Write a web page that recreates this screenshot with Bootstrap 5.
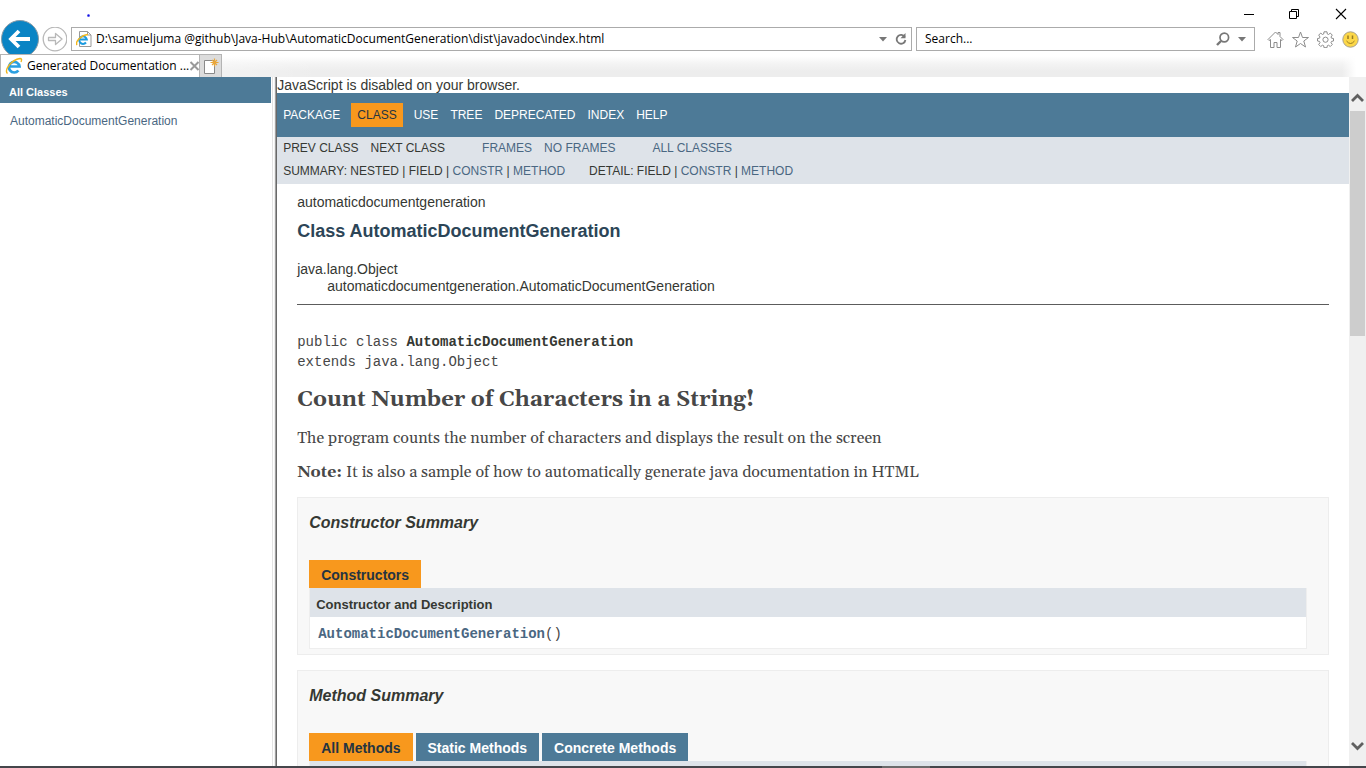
<!DOCTYPE html>
<html lang="en">
<head>
<meta charset="utf-8">
<meta name="viewport" content="width=device-width, initial-scale=1">
<title>Generated Documentation</title>
<link href="https://cdn.jsdelivr.net/npm/bootstrap@5.3.0/dist/css/bootstrap.min.css" rel="stylesheet">
<style>
:root { --blue: #4d7a97; --pale: #dee3e9; --orange: #f8981d; --link: #4a6782; }
body { font: 14px/17px "Liberation Sans", Arial, sans-serif; color: #353833; background: #fff; }
a { color: var(--link); text-decoration: none; }
button { border: 0; background: none; padding: 0; }
svg { display: block; flex: none; }

/* browser window */
.chrome-ui { font: 12px/16px "Open Sans", "Noto Sans", sans-serif; color: #000; }
.caption-row { height: 25px; padding: 7px 17px 0 87px; }
.caption-btns { gap: 30px; }
.ink-dot { width: 3px; height: 3px; margin-top: 7px; background: radial-gradient(#11d, #88f); border-radius: 50%; }
.address-row { height: 29px; padding: 2px 7px 0 0; }
.address-row .back-btn { width: 40px; height: 38px; margin: -8px 0 -8px 0; }
.field { height: 24px; border: 1px solid #ababab; background: #fff; }
.field input { border: 0; outline: 0; padding: 0; min-width: 0; background: transparent; color: #000; font: inherit; }
.search-field { flex: 0 0 339px; }
.tab-row { height: 23px; background: linear-gradient(90deg, #fff 0, #fff0 320px), linear-gradient(270deg, #fff 0, #fff 10px, #fff0 24px), linear-gradient(#fff 10%, #f4f4f4 40%, #ededed 75%); }
.page-tab { width: 199px; border: 1px solid #b4b4b4; border-width: 1px 0 0 1px; background: #fff; position: relative; }
.new-tab { width: 23px; border: 1px solid #b4b4b4; border-bottom: 0; background: #dcdcdc; }

/* left frame */
.class-list { flex: 0 0 calc(20% - 2px); }
.class-bar { height: 26px; padding: 0 9px; background: var(--blue); color: #fff; font-size: 11px; font-weight: 700; line-height: 30px; margin: 0; }
.class-links { padding: 10px; font-size: 12px; }
.splitter { flex: 0 0 6px; background: linear-gradient(90deg, #fff 1px, #e3e3e3 1px 2px, #fff 2px 3px, #f0f0f0 3px 4px, #a0a0a0 4px 5px, #696969 5px); }

/* right frame */
.doc-notice { line-height: 16px; }
.top-nav { height: 44px; background: var(--blue); font-size: 12px; line-height: 14px; padding-top: 10px; }
.top-nav li { padding: 5px 6px; }
.top-nav a { color: #fff; }
.top-nav .current { background: var(--orange); color: #253441; margin: 0 5px; }
.sub-nav { height: 47px; background: var(--pale); font-size: 12px; line-height: 23px; }
.sub-nav ul { margin: 0 25px 0 0; }
.sub-nav .nav-links li { padding: 0 6px; }
.sub-nav .jump { padding-left: 6px; }
.doc-body { padding: 10px 20px 0; }
.doc-body h1 { font-size: 18px; line-height: 22px; font-weight: 700; color: #2c4557; margin: 9px 0 19px; }
.tree-child { padding-left: 30px; }
.rule { border: 0; border-top: 1px solid #5c5c5c; opacity: 1; margin: 9px 0 27px; }
pre { font: 14px/20px "Liberation Mono", "Courier New", monospace; color: #474747; margin: 0; }
pre strong { color: #353833; }
.prose { font-family: Georgia, Gelasio, "Liberation Serif", serif; color: #474747; font-size: 16px; line-height: 18px; }
.prose h2 { font-size: 22px; line-height: 26px; font-weight: 700; margin: 15px 0 16px; }
.prose p { margin: 0 0 16px; }
.summary { background: #f8f8f8; border: 1px solid #ededed; padding: 15px 21px 5px 11px; margin-bottom: 15px; }
.summary h3 { font-size: 16px; line-height: 20px; font-weight: 700; font-style: italic; margin: 0 0 27px; }
.kind-tabs { gap: 3px; }
.kind-tabs button, .kind-tabs span { background: var(--blue); color: #fff; font-weight: 700; font-size: 14px; line-height: 18px; padding: 6px 12px 4px; }
.kind-tabs .on { background: var(--orange); color: #253441; }
.members { width: 100%; background: #fff; border: 1px solid #eee; border-top: 0; }
.members th { background: var(--pale); font-size: 13px; line-height: 17px; padding: 8px 6px 4px; }
.members td { font: 14px/17px "Liberation Mono", "Courier New", monospace; padding: 9px 8px 5px; color: #474747; }

/* scroll bar and screen edge */
.scroll-rail { flex: 0 0 17px; background: #f0f0f0; padding: 15px 1px 14px; }
.scroll-rail .thumb { height: 225px; margin: 8px 0 auto; background: #cdcdcd; }
.screen-edge { flex: 0 0 2px; background: linear-gradient(90deg, #45464b 0 882px, #6b6b6b 882px 930px, #45464b 930px); }
</style>
</head>
<body class="vh-100 overflow-hidden d-flex flex-column">

<header class="chrome-ui flex-shrink-0">
  <div class="caption-row d-flex justify-content-between">
    <span class="ink-dot"></span>
    <div class="caption-btns d-flex align-items-start">
      <button aria-label="Minimize"><svg width="16" height="14"><path d="M3 7.5h10" stroke="#000"/></svg></button>
      <button aria-label="Restore"><svg width="16" height="14"><path d="M2.500 4.500h7v7h-7zM4.500 4.500v-2h7v7h-2" fill="none" stroke="#000"/></svg></button>
      <button aria-label="Close"><svg width="16" height="14"><path d="M3 2l10 10M13 2L3 12" stroke="#000" stroke-width="1.100"/></svg></button>
    </div>
  </div>
  <div class="address-row d-flex align-items-start">
    <button class="back-btn" aria-label="Back"><svg width="40" height="38" viewBox="0 0 40 38"><circle cx="20" cy="20" r="18.500" fill="#0a84c4" stroke="#8a9ba6"/><path d="M30 20H12M19 12l-8 8 8 8" fill="none" stroke="#fff" stroke-width="3.800"/></svg></button>
    <button class="me-1" aria-label="Forward"><svg width="27" height="26" viewBox="0 0 27 26" fill="none" stroke="#b8b8b8" stroke-width="1.300"><circle cx="15" cy="12" r="11.800"/><path d="M8.500 10.500h7v-4l6.500 5.500-6.500 5.500v-4h-7z" stroke-linejoin="round"/></svg></button>
    <div class="field flex-grow-1 d-flex align-items-center ps-1 pe-1">
      <svg width="16" height="18" viewBox="0 0 16 18"><path d="M3.500 1.500h8l3.500 3.500v11.500h-11.500z" fill="#fff" stroke="#999"/><path d="M11.500 1.500v3.500h3.500" fill="none" stroke="#999"/><path d="M2.500 9.500h8.300a3.800 3.800 0 1 0-.8 3" fill="none" stroke="#1b9be0" stroke-width="2"/><path d="M1 15C-1 12 5 5 12 4.500" fill="none" stroke="#f2b61c" stroke-width="1.500"/></svg>
      <input class="flex-grow-1 ms-1" type="text" aria-label="Address" value="D:\samueljuma @github\Java-Hub\AutomaticDocumentGeneration\dist\javadoc\index.html">
      <button class="me-2" aria-label="Show addresses"><svg width="8" height="5"><path d="M0 0h8L4 4.500z" fill="#777"/></svg></button>
      <button aria-label="Refresh"><svg width="12" height="14" viewBox="0 0 12 14"><path d="M9.800 5A4.400 4.400 0 1 0 10.400 8" fill="none" stroke="#777" stroke-width="1.800"/><path d="M10.500 1v5.300H5.500z" fill="#777"/></svg></button>
    </div>
    <div class="field search-field d-flex align-items-center ms-1 ps-2 pe-2 mx-1">
      <input class="flex-grow-1" type="search" aria-label="Search" value="Search...">
      <button class="me-2" aria-label="Search"><svg width="14" height="14" viewBox="0 0 14 14"><circle cx="8.300" cy="5.500" r="4.300" fill="none" stroke="#777" stroke-width="1.700"/><path d="M5 9l-4 4" stroke="#777" stroke-width="2.400"/></svg></button>
      <button aria-label="Search options"><svg width="8" height="5"><path d="M0 0h8L4 4.500z" fill="#777"/></svg></button>
    </div>
    <div class="d-flex gap-2 ps-2 pt-1">
      <button aria-label="Home"><svg width="17" height="17" viewBox="0 0 17 17" fill="#fff" stroke="#8c8c8c"><path d="M1 8.500L8.500 1 11 3.500v-2h2v4l3 3-1 1-1.500-1v8H10v-5H7v5H3.500v-8L2 9.500z"/></svg></button>
      <button aria-label="Favorites"><svg width="17" height="17" viewBox="0 0 17 17" fill="#fff" stroke="#8c8c8c"><path d="M8.500 1l2 5.500h6L11.800 10l1.700 6-5-3.500-5 3.500 1.700-6L.5 6.500h6z"/></svg></button>
      <button aria-label="Tools"><svg width="17" height="17" viewBox="0 0 17 17" fill="#fff" stroke="#8c8c8c"><path d="M7 .8h3l.3 2.200 1.200.5 1.800-1.400 2 2-1.300 1.900.5 1.200 2 .3v2.500l-2 .4-.5 1.200 1.300 1.900-2 2-1.800-1.300-1.200.5-.3 2H7l-.3-2-1.200-.5-1.800 1.300-2-2L3 11.600l-.5-1.200-2-.4V7.500l2-.3L3 6 1.700 4.100l2-2 1.800 1.400L6.700 3z"/><circle cx="8.500" cy="8.700" r="2.600"/></svg></button>
      <button aria-label="Send a smile"><svg width="17" height="17" viewBox="0 0 17 17"><circle cx="8.500" cy="8.500" r="7.700" fill="#fcd748" stroke="#a7a190"/><path d="M6 4.500v3.500M10.500 4.500v3.500" stroke="#967b20" stroke-width="1.500"/><path d="M4.500 10q4 5 8 0" fill="none" stroke="#967b20"/></svg></button>
    </div>
  </div>
  <div class="tab-row d-flex">
    <div class="page-tab d-flex align-items-center ps-1 pe-1">
      <svg width="18" height="18" viewBox="0 0 18 18"><path d="M4 9.500h10.500a5.300 5.300 0 1 0-1.100 4" fill="none" stroke="#2a9fe0" stroke-width="2.700"/><path d="M2.500 16.500C-1 13 6 3 15 1.500q2.500 0 1 3.500" fill="none" stroke="#f0b51e" stroke-width="1.400"/></svg>
      <span class="flex-grow-1 text-nowrap ms-1">Generated Documentation ...</span>
      <button aria-label="Close tab"><svg width="11" height="10"><path d="M1.500 1l8 8M9.500 1l-8 8" stroke="#999" stroke-width="2"/></svg></button>
    </div>
    <button class="new-tab" aria-label="New tab"><svg width="20" height="21" viewBox="0 0 20 21"><path d="M4.500 4.500h10v13h-10z" fill="#fff" stroke="#8a8a8a"/><path d="M14.500 2.500v8M10.500 6.500h8M12 4l5 5M17 4l-5 5" stroke="#e9a63a" stroke-width="1.200"/></svg></button>
  </div>
</header>

<div class="d-flex flex-grow-1 overflow-hidden pt-0" style="min-height:0">
  <aside class="class-list">
    <h2 class="class-bar">All Classes</h2>
    <div class="class-links"><a href="#">AutomaticDocumentGeneration</a></div>
  </aside>
  <div class="splitter"></div>

  <main class="flex-grow-1 overflow-hidden">
    <div class="doc-notice">JavaScript is disabled on your browser.</div>
    <nav class="top-nav">
      <ul class="list-unstyled d-flex m-0">
        <li><a href="#">PACKAGE</a></li>
        <li class="current">CLASS</li>
        <li><a href="#">USE</a></li>
        <li><a href="#">TREE</a></li>
        <li><a href="#">DEPRECATED</a></li>
        <li><a href="#">INDEX</a></li>
        <li><a href="#">HELP</a></li>
      </ul>
    </nav>
    <nav class="sub-nav">
      <div class="nav-links d-flex">
        <ul class="list-unstyled d-flex"><li>PREV CLASS</li><li>NEXT CLASS</li></ul>
        <ul class="list-unstyled d-flex"><li><a href="#">FRAMES</a></li><li><a href="#">NO FRAMES</a></li></ul>
        <ul class="list-unstyled d-flex"><li><a href="#">ALL CLASSES</a></li></ul>
      </div>
      <div class="jump d-flex">
        <div class="me-4">SUMMARY: NESTED | FIELD | <a href="#">CONSTR</a> | <a href="#">METHOD</a></div>
        <div>DETAIL: FIELD | <a href="#">CONSTR</a> | <a href="#">METHOD</a></div>
      </div>
    </nav>

    <div class="doc-body">
      <div>automaticdocumentgeneration</div>
      <h1>Class AutomaticDocumentGeneration</h1>
      <div>java.lang.Object</div>
      <div class="tree-child">automaticdocumentgeneration.AutomaticDocumentGeneration</div>
      <hr class="rule">
      <pre>public class <strong>AutomaticDocumentGeneration</strong>
extends java.lang.Object</pre>
      <div class="prose">
        <h2>Count Number of Characters in a String!</h2>
        <p>The program counts the number of characters and displays the result on the screen</p>
        <p><b>Note:</b> It is also a sample of how to automatically generate java documentation in HTML</p>
      </div>

      <section class="summary">
        <h3>Constructor Summary</h3>
        <div class="kind-tabs d-flex"><span class="on">Constructors</span></div>
        <table class="members">
          <thead><tr><th>Constructor and Description</th></tr></thead>
          <tbody><tr><td><a class="fw-bold" href="#">AutomaticDocumentGeneration</a>()</td></tr></tbody>
        </table>
      </section>

      <section class="summary">
        <h3>Method Summary</h3>
        <div class="kind-tabs d-flex">
          <button class="on">All Methods</button>
          <button>Static Methods</button>
          <button>Concrete Methods</button>
        </div>
        <table class="members">
          <thead><tr><th>Modifier and Type</th><th>Method and Description</th></tr></thead>
        </table>
      </section>
    </div>
  </main>

  <div class="scroll-rail d-flex flex-column">
    <svg width="15" height="11" viewBox="0 0 15 11"><path d="M2 9l5.500-5.500L13 9" fill="none" stroke="#606060" stroke-width="2.800"/></svg>
    <div class="thumb"></div>
    <svg width="15" height="11" viewBox="0 0 15 11"><path d="M2 2l5.500 5.500L13 2" fill="none" stroke="#606060" stroke-width="2.800"/></svg>
  </div>
</div>
<div class="screen-edge"></div>

<script src="https://cdn.jsdelivr.net/npm/bootstrap@5.3.0/dist/js/bootstrap.bundle.min.js"></script>
</body>
</html>
